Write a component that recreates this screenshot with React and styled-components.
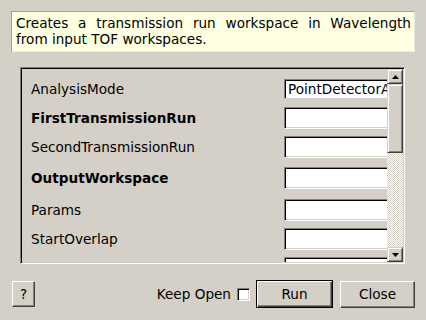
import React from 'react'
import styled, { createGlobalStyle } from 'styled-components'

const GlobalStyle = createGlobalStyle`
  html, body {
    margin: 0;
    padding: 0;
    background: #d4d0c8;
  }
  * {
    box-sizing: border-box;
  }
`

const props = [
  { name: 'AnalysisMode', value: 'PointDetectorAnalysis', combo: true, gap: 8 },
  { name: 'FirstTransmissionRun', bold: true, gap: 7 },
  { name: 'SecondTransmissionRun', gap: 9 },
  { name: 'OutputWorkspace', bold: true, gap: 10 },
  { name: 'Params', gap: 7 },
  { name: 'StartOverlap', gap: 7 },
  { name: 'EndOverlap', gap: 7 },
  { name: 'Debug', gap: 7 },
]

function App() {
  return (
    <>
      <GlobalStyle />
      <Dialog>
        <Description>
          Creates a transmission run workspace in Wavelength from input TOF workspaces.
        </Description>

        <Frame>
          <Viewport>
            <Rows>
              {props.map(p => (
                <Row key={p.name} $gap={p.gap}>
                  <Label $bold={p.bold}>{p.name}</Label>
                  {p.combo
                    ? <Combo>{p.value}</Combo>
                    : <Field />}
                </Row>
              ))}
            </Rows>
          </Viewport>
          <ScrollBar>
            <ArrowButton>
              <svg width="7" height="4" viewBox="0 0 7 4"><path d="M3.5 0 L7 4 L0 4 Z" fill="#000" /></svg>
            </ArrowButton>
            <Thumb />
            <Track />
            <ArrowButton>
              <svg width="7" height="4" viewBox="0 0 7 4"><path d="M0 0 L7 0 L3.5 4 Z" fill="#000" /></svg>
            </ArrowButton>
          </ScrollBar>
        </Frame>

        <Footer>
          <Button $w={23} $h={26}>?</Button>
          <Spacer />
          <KeepOpen>
            Keep Open
            <CheckBox />
          </KeepOpen>
          <Button $w={77} $h={28} $default>Run</Button>
          <Button $w={75} $h={27}>Close</Button>
        </Footer>
      </Dialog>
    </>
  )
}

export default App

const Dialog = styled.div`
  width: 426px;
  height: 320px;
  padding: 11px 11px 12px 11px;
  display: flex;
  flex-direction: column;
  font-family: "DejaVu Sans", sans-serif;
  font-size: 13.6px;
  color: #000;
  background: #d4d0c8;
`

const Description = styled.div`
  height: 41px;
  padding: 3px 3px 0 4px;
  background: #ffffe1;
  border: 1px solid;
  border-color: #a0a0a0 #e8e8e8 #e8e8e8 #a0a0a0;
  line-height: 16px;
  text-align: justify;
`

const Frame = styled.div`
  margin: 15px 10px 0 9px;
  height: 197px;
  display: flex;
  border: 1px solid;
  border-color: #808080 #fff #fff #808080;
  box-shadow: inset 1px 1px #000, inset -1px -1px #d4d0c8;
  padding: 1px;
`

const Viewport = styled.div`
  flex: 1;
  overflow: hidden;
  position: relative;
`

const Rows = styled.div`
  padding: 10px 0 0 9px;
  display: flex;
  flex-direction: column;
`

const Row = styled.div`
  display: flex;
  align-items: center;
  height: 22px;
  margin-bottom: ${p => p.$gap}px;
  &:first-child {
    height: 20px;
  }
`

const Label = styled.div`
  width: 253px;
  flex: none;
  font-weight: ${p => (p.$bold ? 'bold' : 'normal')};
  white-space: nowrap;
`

const Field = styled.div`
  width: 140px;
  height: 100%;
  flex: none;
  background: #fff;
  border: 1px solid;
  border-color: #808080 #fff #fff #808080;
  box-shadow: inset 1px 1px #000, inset -1px -1px #d4d0c8;
`

const Combo = styled(Field)`
  padding: 1px 0 0 3px;
  line-height: 16px;
  white-space: nowrap;
  overflow: hidden;
  border-color: #808080 #fff #d4d0c8 #808080;
  box-shadow: inset 1px 1px #000;
`

const ScrollBar = styled.div`
  width: 16px;
  flex: none;
  display: flex;
  flex-direction: column;
`

const Raised = styled.div`
  background: #d4d0c8;
  border: 1px solid;
  border-color: #d4d0c8 #404040 #404040 #d4d0c8;
  box-shadow: inset 1px 1px #fff, inset -1px -1px #808080;
`

const ArrowButton = styled(Raised)`
  height: 15px;
  flex: none;
  display: flex;
  align-items: center;
  justify-content: center;
`

const Thumb = styled(Raised)`
  height: 69px;
  flex: none;
`

const Track = styled.div`
  flex: 1;
  background: repeating-conic-gradient(#fff 0 25%, #d4d0c8 0 50%) 0 0 / 2px 2px;
`

const Footer = styled.div`
  margin-top: 16px;
  display: flex;
  align-items: center;
  padding-left: 1px;
`

const Spacer = styled.div`
  flex: 1;
`

const Button = styled.button`
  width: ${p => p.$w}px;
  height: ${p => p.$h}px;
  margin-left: ${p => (p.$default ? 6 : 7)}px;
  padding: 0;
  font-family: "DejaVu Sans", sans-serif;
  font-size: 13.6px;
  color: #000;
  background: #d4d0c8;
  border: 1px solid;
  border-color: ${p => (p.$default ? '#000' : '#fff #404040 #404040 #fff')};
  box-shadow: ${p => (p.$default
    ? 'inset 1px 1px #fff, inset -1px -1px #404040, inset -2px -2px #808080'
    : 'inset -1px -1px #808080')};
  &:first-child {
    margin-left: 0;
  }
`

const KeepOpen = styled.label`
  display: flex;
  align-items: center;
  gap: 6px;
  white-space: nowrap;
`

const CheckBox = styled.span`
  display: inline-block;
  width: 13px;
  height: 13px;
  background: #fff;
  border: 1px solid;
  border-color: #808080 #fff #fff #808080;
  box-shadow: inset 1px 1px #000, inset -1px -1px #d4d0c8;
`
